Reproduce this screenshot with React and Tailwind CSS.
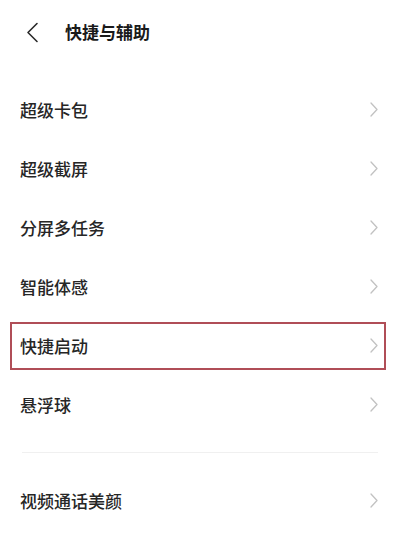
const items = ["超级卡包", "超级截屏", "分屏多任务", "智能体感", "快捷启动", "悬浮球"];

function Chevron() {
  return (
    <svg width="8" height="15" viewBox="0 0 8 15" className="text-[#c2c2c2]">
      <polyline points="1,1 7,7.5 1,14" fill="none" stroke="currentColor" strokeWidth="1.3" strokeLinecap="round" strokeLinejoin="round" />
    </svg>
  );
}

function Row({ label, marked }) {
  return (
    <div className="relative flex h-[59px] items-center justify-between pl-[20px] pr-[22px]">
      <span className="text-[17px] font-medium text-[#262626]">{label}</span>
      <Chevron />
      {marked && (
        <div className="pointer-events-none absolute left-[10px] right-[14px] top-[6px] bottom-[5px] border-2 border-[#b04e57]" />
      )}
    </div>
  );
}

export default function App() {
  return (
    <div
      className="h-[550px] w-[400px] overflow-hidden bg-white"
      style={{ fontFamily: '"Noto Sans CJK SC", "Noto Sans", sans-serif' }}
    >
      <div className="flex h-[64px] items-center pl-[26px]">
        <svg width="13" height="21" viewBox="0 0 13 21" className="text-[#2a2a2a]">
          <polyline points="11,1.5 2,10.5 11,19.5" fill="none" stroke="currentColor" strokeWidth="1.6" strokeLinecap="round" strokeLinejoin="round" />
        </svg>
        <span className="ml-[26px] text-[17px] font-bold text-[#1a1a1a]">快捷与辅助</span>
      </div>
      <div className="pt-[16px]">
        {items.map((label) => (
          <Row key={label} label={label} marked={label === "快捷启动"} />
        ))}
      </div>
      <div className="px-[22px] py-[18px]">
        <div className="h-px bg-[#f0f0f0]" />
      </div>
      <Row label="视频通话美颜" />
    </div>
  );
}
